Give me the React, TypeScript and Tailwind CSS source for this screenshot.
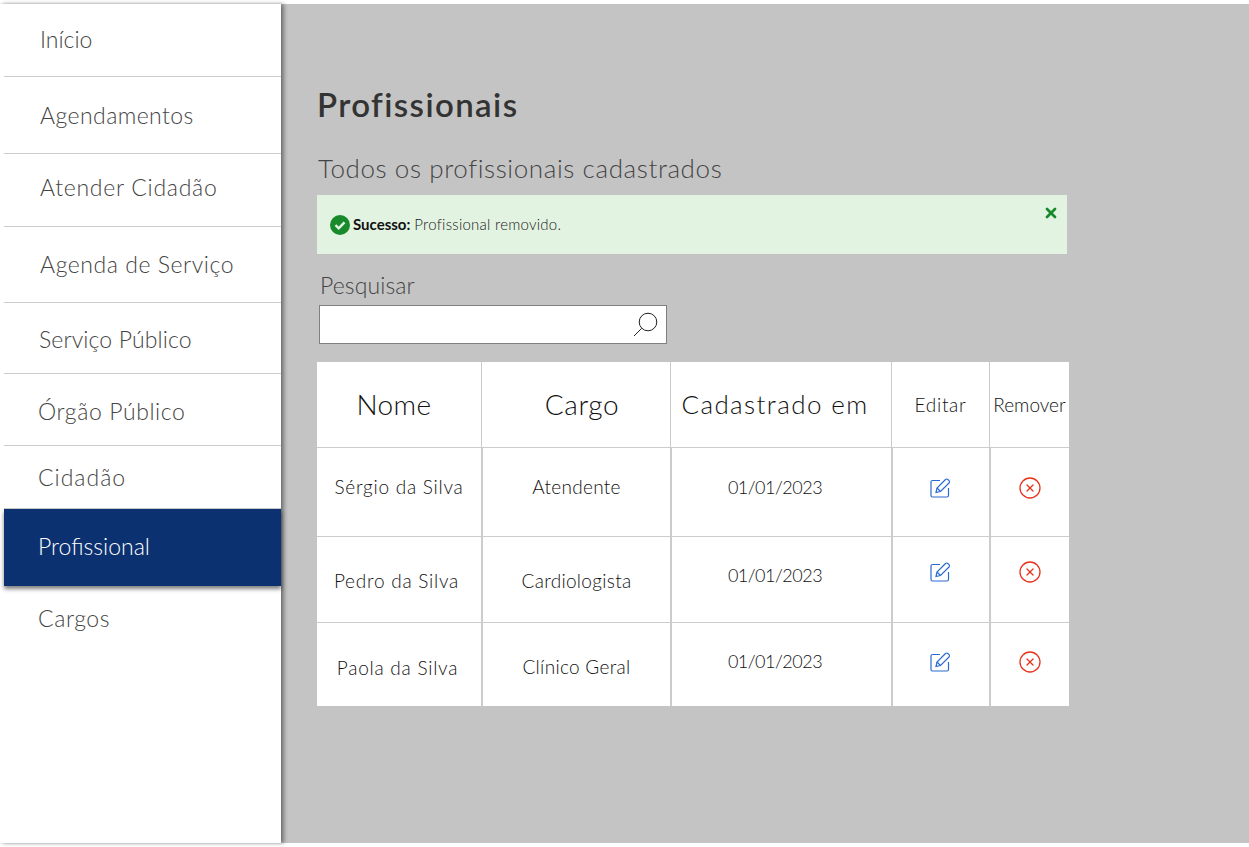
import { CircleX, X } from "lucide-react";

const menu = [
  { label: "Início", cls: "h-[73px] pl-[36px] pb-[2px] tracking-[0px]" },
  { label: "Agendamentos", cls: "h-[77px] pl-[36px] tracking-[0.43px]" },
  { label: "Atender Cidadão", cls: "h-[73px] pl-[36px] pb-[6px] tracking-[0.73px]" },
  { label: "Agenda de Serviço", cls: "h-[76px] pl-[36px] tracking-[0.55px]" },
  { label: "Serviço Público", cls: "h-[71px] pl-[35px] pt-[2px] tracking-[0.13px]" },
  { label: "Órgão Público", cls: "h-[72px] pl-[34px] pt-[4px] tracking-[0.6px]" },
  { label: "Cidadão", cls: "h-[63px] pl-[34px] tracking-[1px]" },
];

const rows = [
  {
    nome: "Sérgio da Silva",
    cargo: "Atendente",
    h: "h-[89px]",
    nomeY: "pb-[10px]",
    cargoY: "pb-[10px]",
    dataY: "pb-[10px]",
    iconY: "pb-[9px]",
  },
  {
    nome: "Pedro da Silva",
    cargo: "Cardiologista",
    h: "h-[86px]",
    nomeY: "pt-[4px] pr-[5px]",
    cargoY: "pt-[4px]",
    dataY: "pb-[8px]",
    iconY: "pb-[16px]",
  },
  {
    nome: "Paola da Silva",
    cargo: "Clínico Geral",
    h: "h-[83px]",
    nomeY: "pt-[8px] pr-[3px]",
    cargoY: "pt-[6px]",
    dataY: "pb-[6px]",
    iconY: "pb-[6px]",
  },
];

function EditIcon() {
  return (
    <svg viewBox="0 0 21 20" className="mr-[2px] h-5 w-[21px] text-[#2a6bd0]" fill="none" stroke="currentColor" strokeWidth="1.2">
      <path d="M10 2.5H2.5a1.5 1.5 0 0 0-1.5 1.5v13.5a1.5 1.5 0 0 0 1.5 1.5H17a1.5 1.5 0 0 0 1.5-1.5V10" />
      <path d="M6 14.5l1-4.5 8.5-8.5a1.6 1.6 0 0 1 2.3 0l1.2 1.2a1.6 1.6 0 0 1 0 2.3L10.5 13.5z" />
      <path d="M7 10l3.5 3.5" />
    </svg>
  );
}

function SearchIcon() {
  return (
    <svg viewBox="0 0 25 25" className="size-[25px] text-[#222]" fill="none" stroke="currentColor" strokeWidth="1">
      <circle cx="15" cy="10" r="8.8" />
      <path d="M8.7 16.3L1 24" />
    </svg>
  );
}

export default function App() {
  return (
    <div className="flex h-[847px] w-[1249px] overflow-hidden bg-white pt-1 pb-1 font-['Lato',sans-serif] font-light text-[#333]">
      {/* Sidebar */}
      <aside className="relative z-10 flex w-[281px] shrink-0 flex-col bg-white pl-1 shadow-[3px_0_4px_rgba(0,0,0,0.4),0_0_2px_rgba(0,0,0,0.15)]">
        {menu.map((item) => (
          <div key={item.label} className={`flex items-center border-b border-[#ccc] text-[23px] text-[#444] ${item.cls}`}>
            {item.label}
          </div>
        ))}
        <div className="flex h-[77px] items-center bg-[#0c3170] pb-[2px] pl-[34px] text-[23px] text-white shadow-[0_3px_4px_rgba(0,0,0,0.5)]">
          Profissional
        </div>
        <div className="flex h-[64px] items-center pl-[34px] text-[23px] tracking-[0.6px] text-[#444]">Cargos</div>
      </aside>

      {/* Content */}
      <main className="flex-1 bg-[#c4c4c4] pl-[36px]">
        <h1 className="mt-[79px] h-[42px] text-[33px] leading-[42px] font-semibold tracking-[1.4px] text-[#333]">Profissionais</h1>
        <h2 className="mt-[30px] ml-px h-[26px] text-[26px] leading-[26px] tracking-[0.6px] text-[#444]">
          Todos os profissionais cadastrados
        </h2>

        <div className="relative mt-[14px] flex h-[59px] w-[750px] items-center bg-[#e2f3e1] pl-[13px] text-[15px]">
          <svg viewBox="0 0 20 20" className="mr-[3px] size-5 shrink-0">
            <circle cx="10" cy="10" r="10" fill="#188a2c" />
            <path d="M5.5 10.2l3.2 3.2 5.8-6" fill="none" stroke="#e2f3e1" strokeWidth="2.4" />
          </svg>
          <span className="font-bold text-[#111]">Sucesso:</span>
          <span className="ml-1 tracking-[0.25px] text-[#222]">Profissional removido.</span>
          <X className="absolute top-[10px] right-[8px] size-4 text-[#188a2c]" strokeWidth={4} />
        </div>

        <div className="mt-[18px] ml-[3px] h-[26px] text-[23px] leading-[26px] tracking-[0.1px] text-[#444]">Pesquisar</div>
        <div className="mt-[7px] ml-[2px] flex h-[39px] w-[348px] items-center justify-end border border-[#808080] bg-white pr-2">
          <SearchIcon />
        </div>

        {/* Table */}
        <div className="mt-[18px] w-[752px] bg-white text-center">
          <div className="flex h-[86px] border-b border-[#ccc] text-[#111]">
            <div className="flex w-[165px] items-center justify-center border-r border-[#ccc] pr-[10px] pb-[2px] text-[28px] tracking-[0.4px]">Nome</div>
            <div className="flex w-[189px] items-center justify-center border-r border-[#ccc] pb-[2px] pl-[12px] text-[28px] tracking-[0.6px]">Cargo</div>
            <div className="flex w-[221px] items-center justify-center border-r border-[#ccc] pr-[12px] text-[26px] tracking-[1.4px]">Cadastrado em</div>
            <div className="flex w-[98px] items-center justify-center border-r border-[#ccc] pt-[2px] text-[19px] tracking-[0.7px]">Editar</div>
            <div className="flex flex-1 items-center justify-center pt-[2px] text-[19px]">Remover</div>
          </div>
          {rows.map((row) => (
            <div key={row.nome} className={`flex border-b border-[#ccc] text-[19px] text-[#111] last:border-b-0 ${row.h}`}>
              <div className={`flex w-[166px] items-center justify-center border-r-2 border-[#ccc] tracking-[0.75px] ${row.nomeY}`}>{row.nome}</div>
              <div className={`flex w-[189px] items-center justify-center border-r-2 border-[#ccc] tracking-[0.3px] ${row.cargoY}`}>{row.cargo}</div>
              <div className={`flex w-[221px] items-center justify-center border-r-2 border-[#ccc] pr-[13px] text-[18px] tracking-[-0.5px] ${row.dataY}`}>01/01/2023</div>
              <div className={`flex w-[98px] items-center justify-center border-r-2 border-[#ccc] ${row.iconY}`}>
                <EditIcon />
              </div>
              <div className={`flex flex-1 items-center justify-center ${row.iconY}`}>
                <CircleX className="size-6 text-[#e8331c]" strokeWidth={1.3} />
              </div>
            </div>
          ))}
        </div>
      </main>
    </div>
  );
}
